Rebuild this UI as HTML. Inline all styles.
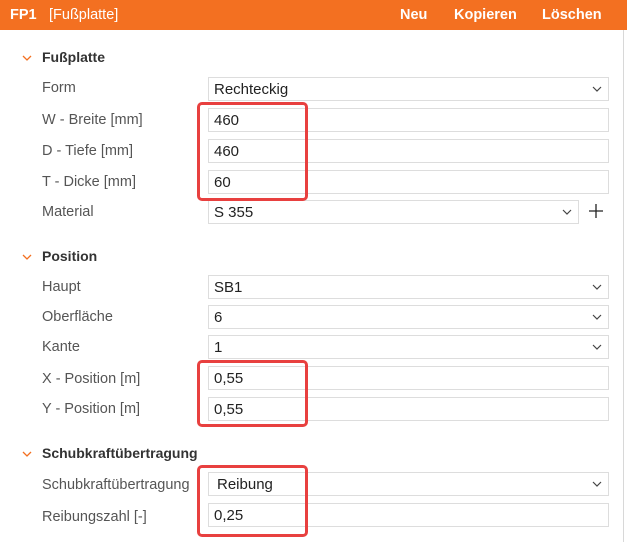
<!DOCTYPE html>
<html><head><meta charset="utf-8"><style>
*{margin:0;padding:0;box-sizing:border-box}
body{width:627px;height:542px;background:#fff;font-family:"Liberation Sans",sans-serif;position:relative;overflow:hidden;color:#444}
.hdr{position:absolute;left:0;top:0;width:627px;height:30px;background:#f37021;color:#fff;font-size:14.5px}
.hdr span{position:absolute;top:7px}
.vl{position:absolute;left:623px;top:30px;width:1px;height:512px;background:#d8d8d8}
.sec{position:absolute;left:42px;font-weight:bold;font-size:14px;color:#333}
.chev{position:absolute;left:21px;width:12px;height:8px}
.lbl{position:absolute;left:42px;font-size:14.5px;color:#555}
.f{position:absolute;left:208px;width:401px;height:24px;border:1px solid #ddd;font-size:15px;color:#222;padding:3px 0 0 5px}
.dd{position:absolute;right:6px;top:8px}
.red{position:absolute;left:197px;width:111px;border:3px solid #e8403f;border-radius:5px}
</style></head><body>
<div class="hdr"><span style="left:10px;font-weight:bold">FP1</span><span style="left:49px">[Fußplatte]</span><span style="left:400px;font-weight:bold">Neu</span><span style="left:454px;font-weight:bold">Kopieren</span><span style="left:542px;font-weight:bold">Löschen</span></div>
<div class="vl"></div>
<svg class="chev" style="top:54px" viewBox="0 0 12 8"><path d="M2 2l4 4 4-4" fill="none" stroke="#f37021" stroke-width="1.3"/></svg>
<div class="sec" style="top:49px">Fußplatte</div>
<svg class="chev" style="top:253px" viewBox="0 0 12 8"><path d="M2 2l4 4 4-4" fill="none" stroke="#f37021" stroke-width="1.3"/></svg>
<div class="sec" style="top:248px">Position</div>
<svg class="chev" style="top:450px" viewBox="0 0 12 8"><path d="M2 2l4 4 4-4" fill="none" stroke="#f37021" stroke-width="1.3"/></svg>
<div class="sec" style="top:445px">Schubkraftübertragung</div>

<div class="lbl" style="top:80px">Form</div><div class="f" style="top:77px">Rechteckig<svg class="dd" width="10" height="6" viewBox="0 0 10 6"><path d="M1 1l4 4 4-4" fill="none" stroke="#444" stroke-width="1.2"/></svg></div>
<div class="lbl" style="top:112px">W - Breite [mm]</div><div class="f" style="top:108px">460</div>
<div class="lbl" style="top:143px">D - Tiefe [mm]</div><div class="f" style="top:139px">460</div>
<div class="lbl" style="top:174px">T - Dicke [mm]</div><div class="f" style="top:170px">60</div>
<div class="lbl" style="top:204px">Material</div><div class="f" style="top:200px;width:371px">S 355<svg class="dd" width="10" height="6" viewBox="0 0 10 6"><path d="M1 1l4 4 4-4" fill="none" stroke="#444" stroke-width="1.2"/></svg></div>
<svg style="position:absolute;left:588px;top:203px" width="16" height="16" viewBox="0 0 16 16"><path d="M8 1v14M1 8h14" stroke="#222" stroke-width="1.3"/></svg>

<div class="lbl" style="top:279px">Haupt</div><div class="f" style="top:275px">SB1<svg class="dd" width="10" height="6" viewBox="0 0 10 6"><path d="M1 1l4 4 4-4" fill="none" stroke="#444" stroke-width="1.2"/></svg></div>
<div class="lbl" style="top:309px">Oberfläche</div><div class="f" style="top:305px">6<svg class="dd" width="10" height="6" viewBox="0 0 10 6"><path d="M1 1l4 4 4-4" fill="none" stroke="#444" stroke-width="1.2"/></svg></div>
<div class="lbl" style="top:339px">Kante</div><div class="f" style="top:335px">1<svg class="dd" width="10" height="6" viewBox="0 0 10 6"><path d="M1 1l4 4 4-4" fill="none" stroke="#444" stroke-width="1.2"/></svg></div>
<div class="lbl" style="top:371px">X - Position [m]</div><div class="f" style="top:366px">0,55</div>
<div class="lbl" style="top:401px">Y - Position [m]</div><div class="f" style="top:397px">0,55</div>

<div class="lbl" style="top:477px">Schubkraftübertragung</div><div class="f" style="top:472px;padding-left:8px">Reibung<svg class="dd" width="10" height="6" viewBox="0 0 10 6"><path d="M1 1l4 4 4-4" fill="none" stroke="#444" stroke-width="1.2"/></svg></div>
<div class="lbl" style="top:509px">Reibungszahl [-]</div><div class="f" style="top:503px">0,25</div>

<div class="red" style="top:102px;height:99px"></div>
<div class="red" style="top:360px;height:67px"></div>
<div class="red" style="top:465px;height:72px"></div>
</body></html>
